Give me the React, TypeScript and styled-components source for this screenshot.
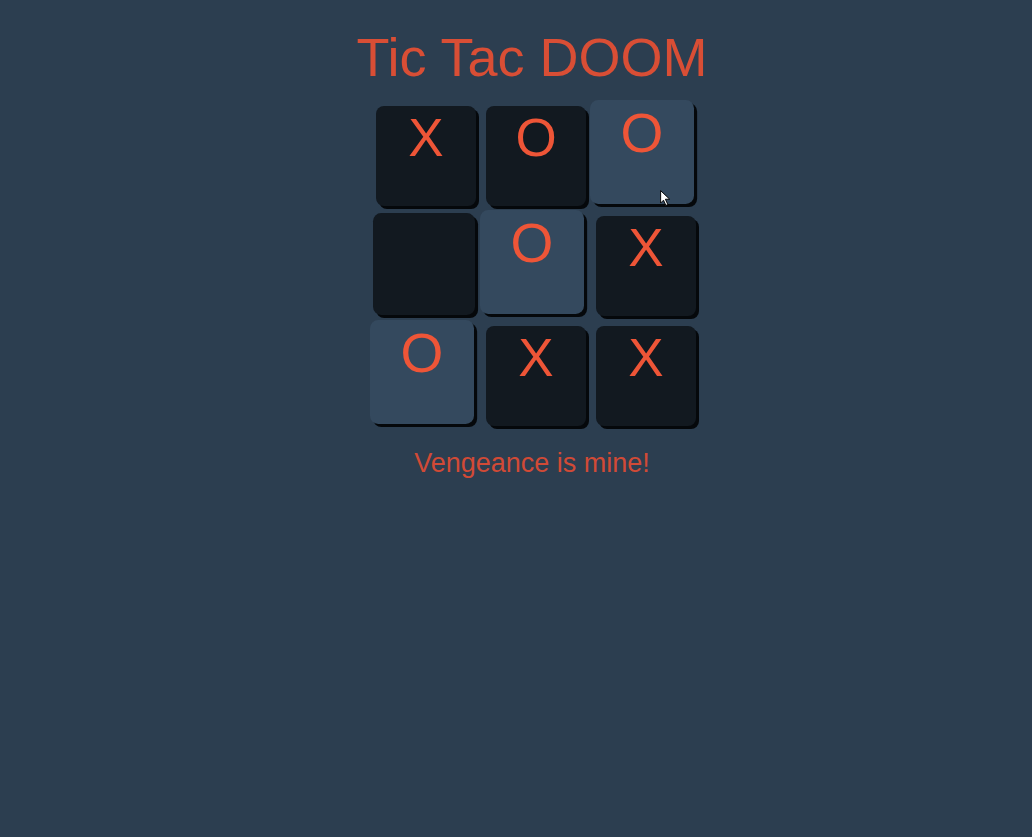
import styled, { createGlobalStyle } from 'styled-components';

const GlobalStyle = createGlobalStyle`
    html, body {
        margin: 0;
        padding: 0;
        background-color: #2c3e50;
        font-family: "Liberation Sans", Arial, sans-serif;
    }
`;

const Page = styled.div`
    min-height: 837px;
    display: flex;
    flex-direction: column;
    align-items: center;
    padding-left: 32px;
    box-sizing: border-box;
`;

const Title = styled.h1`
    margin: 0;
    padding-top: 27px;
    font-size: 54px;
    font-weight: normal;
    line-height: 60px;
    color: #d94e35;
`;

const Board = styled.div`
    display: grid;
    grid-template-columns: repeat(3, 100px);
    grid-auto-rows: 100px;
    gap: 10px;
    margin-top: 19px;
    margin-left: 8px;
`;

const Square = styled.button<{ $lit?: boolean; $lift?: number }>`
    position: relative;
    width: 100px;
    height: 100px;
    border: none;
    border-radius: 8px;
    display: flex;
    justify-content: center;
    align-items: flex-start;
    font-family: inherit;
    font-size: 53px;
    line-height: 53px;
    padding: 5px 0 0;
    box-sizing: border-box;
    color: #ee5537;
    cursor: pointer;
    background-color: ${p => (p.$lit ? '#34495e' : '#121920')};
    box-shadow: 3px 3px 0 #05080b;
    transform: ${p => {
        const lift = p.$lift ?? 0;
        return `translate(-${lift}px, -${lift}px) scale(${1 + lift / 100})`;
    }};
`;

const Pointer = styled.svg`
    position: absolute;
    left: 67px;
    top: 86px;
    width: 11px;
    height: 17px;
`;

const Message = styled.p`
    margin: 22px 0 0;
    font-size: 27px;
    line-height: 31px;
    color: #d14a36;
`;

type Cell = { mark: string; lit?: boolean; lift?: number };

const cells: Cell[] = [
    { mark: 'X' },
    { mark: 'O' },
    { mark: 'O', lit: true, lift: 4 },
    { mark: '', lift: 2 },
    { mark: 'O', lit: true, lift: 4 },
    { mark: 'X' },
    { mark: 'O', lit: true, lift: 4 },
    { mark: 'X' },
    { mark: 'X' },
];

const App = () => {
    return (
        <>
            <GlobalStyle />
            <Page>
                <Title>Tic Tac DOOM</Title>
                <Board>
                    {cells.map((cell, i) => (
                        <Square key={i} $lit={cell.lit} $lift={cell.lift}>
                            {cell.mark}
                            {i === 2 && (
                                <Pointer viewBox="0 0 12 18">
                                    <path d="M1 1 L1 14 L4 11 L6.5 16.5 L8.5 15.5 L6 10 L10.5 10 Z" fill="#fff" stroke="#000" strokeWidth="1" />
                                </Pointer>
                            )}
                        </Square>
                    ))}
                </Board>
                <Message>Vengeance is mine!</Message>
            </Page>
        </>
    );
};

export default App;
